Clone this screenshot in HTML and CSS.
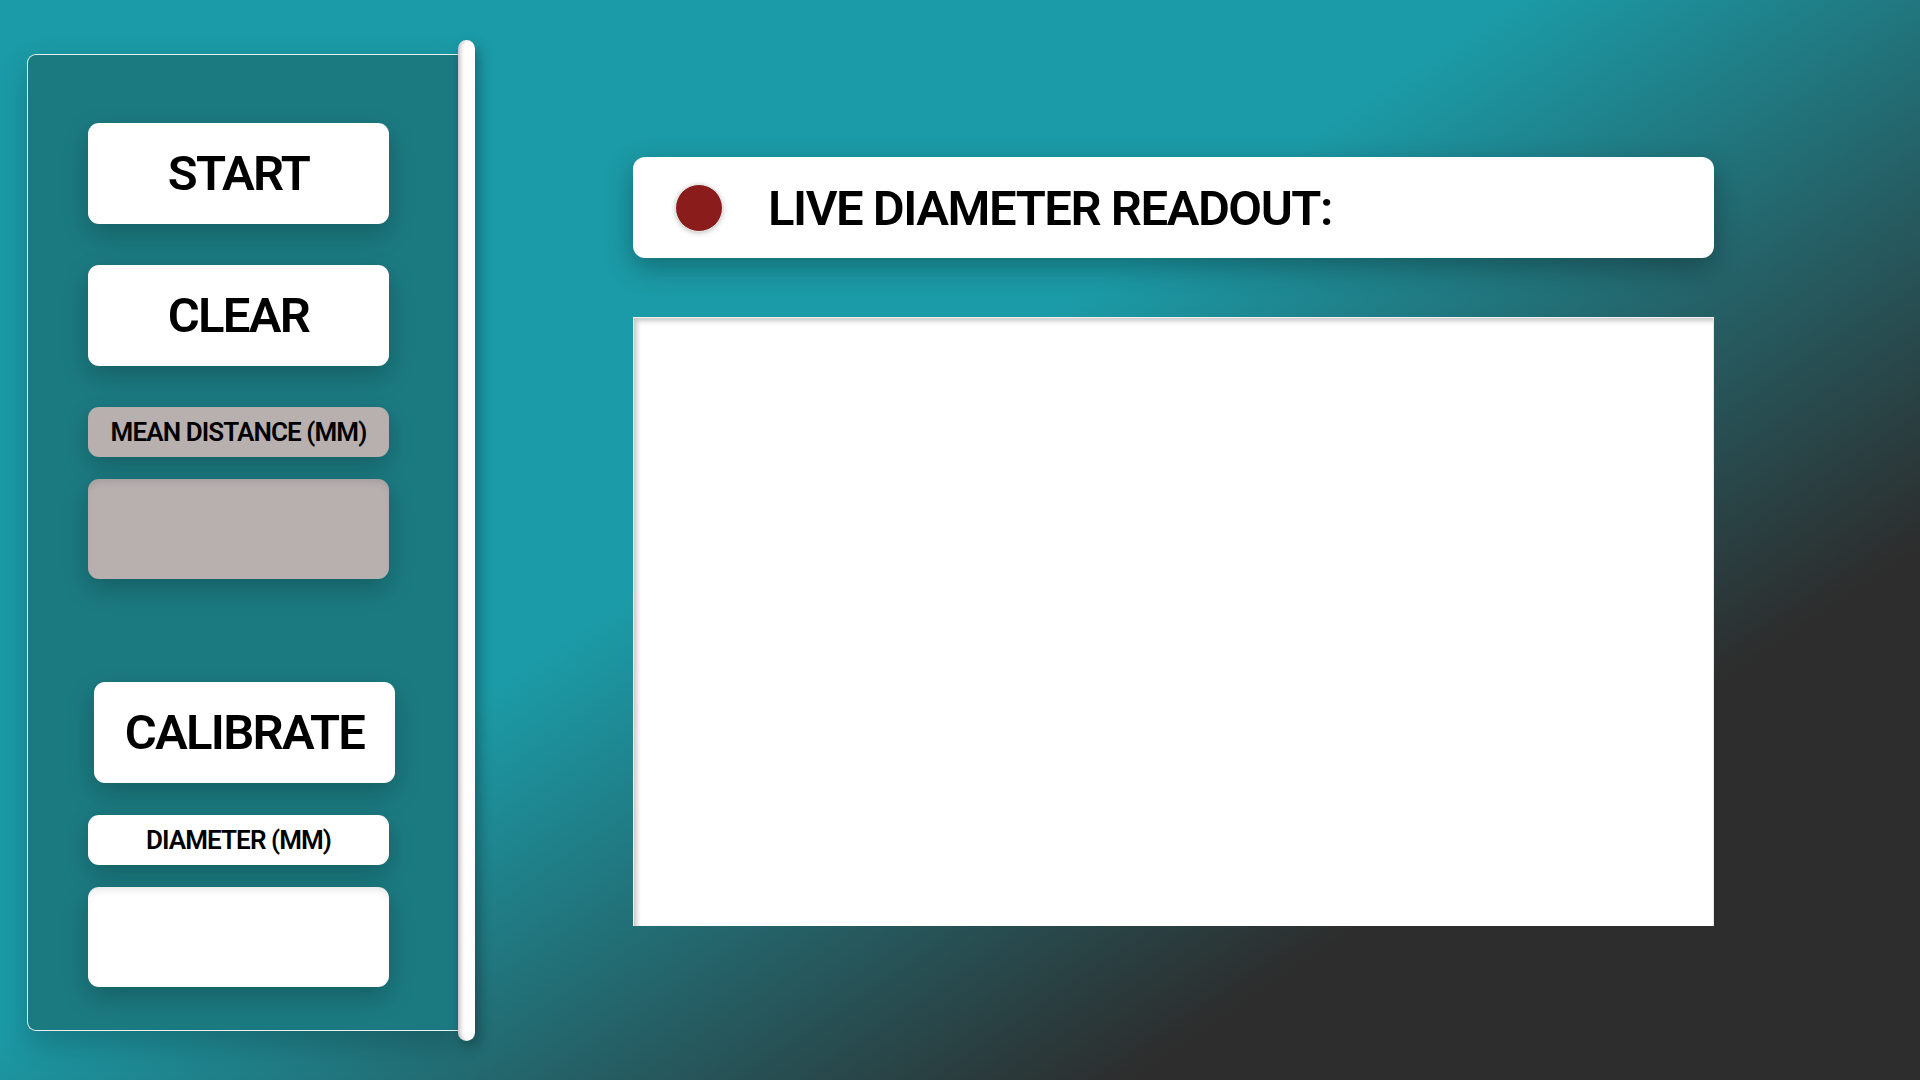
FILE: index.html
```html
<!DOCTYPE html>
<html lang="en">
<head>
<meta charset="utf-8">
<title>Live Diameter Readout</title>
<link rel="stylesheet" href="styles.css">
</head>
<body>
<div class="app">
  <aside class="sidebar">
    <div class="panel">
      <button class="btn btn-start">START</button>
      <button class="btn btn-clear">CLEAR</button>
      <div class="label label-grey">MEAN DISTANCE (MM)</div>
      <div class="value value-grey"></div>
      <button class="btn btn-calibrate">CALIBRATE</button>
      <div class="label label-white label-diameter">DIAMETER (MM)</div>
      <div class="value value-white"></div>
    </div>
    <div class="scrollbar"></div>
  </aside>
  <main class="main">
    <div class="readout">
      <span class="dot"></span>
      <span class="readout-title">LIVE DIAMETER READOUT:</span>
    </div>
    <div class="canvas"></div>
  </main>
</div>
</body>
</html>
```
FILE: styles.css
```css
* { box-sizing: border-box; }

html, body {
  margin: 0;
  padding: 0;
  width: 1920px;
  height: 1080px;
  overflow: hidden;
}

body {
  background: linear-gradient(146deg, #1b9ba7 43%, #2d2d2d 77.5%);
  font-family: Roboto, "Liberation Sans", sans-serif;
  color: #000;
}

.app {
  display: flex;
  padding: 40px 0 0 27px;
}

.sidebar {
  display: flex;
  align-items: flex-start;
}

.panel {
  margin-top: 14px;
  width: 431px;
  height: 977px;
  background: #1b7a80;
  border: 1px solid #e8f2f2;
  border-right: none;
  border-radius: 9px 0 0 9px;
  padding: 68px 0 0 60px;
  display: flex;
  flex-direction: column;
  align-items: flex-start;
  box-shadow: 0 12px 30px rgba(0, 0, 0, 0.2);
}

.scrollbar {
  width: 17px;
  height: 1001px;
  background: #fff;
  border-radius: 9px;
  box-shadow: inset 5px 0 5px -3px rgba(0, 0, 0, 0.28), 4px 6px 14px rgba(0, 0, 0, 0.3);
}

.btn {
  width: 301px;
  height: 101px;
  border: none;
  border-radius: 11px;
  background: #fff;
  font-family: Roboto, "Liberation Sans", sans-serif;
  font-weight: 600;
  font-size: 49px;
  letter-spacing: -0.035em;
  color: #000;
  padding: 0;
  box-shadow: 0 10px 26px rgba(0, 0, 0, 0.22);
}

.btn-clear { margin-top: 41px; }
.btn-calibrate { margin-top: 103px; margin-left: 6px; }

.label {
  width: 301px;
  height: 50px;
  border-radius: 11px;
  display: flex;
  align-items: center;
  justify-content: center;
  font-weight: 600;
  font-size: 26px;
  letter-spacing: -0.035em;
  box-shadow: 0 8px 22px rgba(0, 0, 0, 0.22);
}

.label-grey {
  margin-top: 41px;
  background: #b8afaf;
}

.label-white {
  background: #fff;
}

.label-diameter { margin-top: 32px; }

.value {
  margin-top: 22px;
  width: 301px;
  height: 100px;
  border-radius: 11px;
  box-shadow: inset 0 6px 8px -4px rgba(0, 0, 0, 0.12), 0 10px 26px rgba(0, 0, 0, 0.22);
}

.value-grey { background: #b8afaf; }
.value-white { background: #fff; }

.main {
  margin-left: 158px;
  padding-top: 117px;
  width: 1081px;
  display: flex;
  flex-direction: column;
}

.readout {
  height: 101px;
  background: #fff;
  border-radius: 12px;
  display: flex;
  align-items: center;
  padding-left: 42px;
  box-shadow: 0 10px 28px rgba(0, 0, 0, 0.3);
}

.dot {
  width: 48px;
  height: 48px;
  border-radius: 50%;
  background: #8a1c1c;
  border: 1px solid #eee;
  box-shadow: 0 1px 5px rgba(0, 0, 0, 0.25);
  flex: none;
}

.readout-title {
  margin-left: 45px;
  font-weight: 600;
  font-size: 49px;
  letter-spacing: -0.03em;
  padding-top: 2px;
}

.canvas {
  margin-top: 59px;
  height: 609px;
  background: #fff;
  border-top: 1px solid #f2f2f2;
  border-left: 1px solid #f2f2f2;
  border-right: 1px solid #e4e4e4;
  box-shadow: inset 4px 4px 5px -1px rgba(0, 0, 0, 0.22);
}
```
